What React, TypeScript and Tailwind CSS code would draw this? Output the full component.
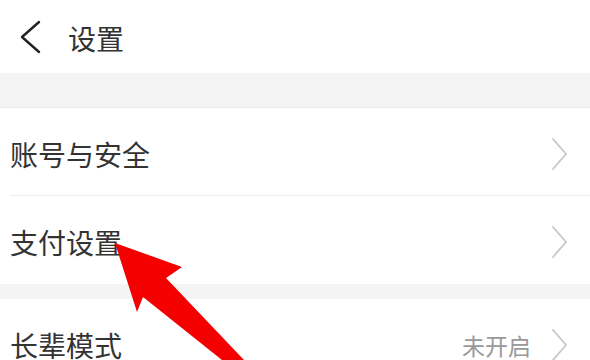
interface Item {
  label: string;
  value?: string;
}

const Chevron = ({ className, color, width }: { className?: string; color: string; width: number }) => (
  <svg className={className} width="18" height="34" viewBox="0 0 18 34" fill="none">
    <polyline
      points="2,2 15,17 2,32"
      stroke={color}
      strokeWidth={width}
      strokeLinecap="round"
      strokeLinejoin="round"
    />
  </svg>
);

const Row = ({ item, divider }: { item: Item; divider: boolean }) => (
  <div className="pl-[10px] bg-white">
    <div
      className={`h-[88px] flex items-center pr-[21px] ${
        divider ? 'border-b border-[#eeeeee]' : ''
      }`}
    >
      <span className="text-[28px] leading-none text-[#333333] pt-[4px]">{item.label}</span>
      <div className="ml-auto flex items-center pt-[4px]">
        {item.value && (
          <span className="text-[23px] leading-none text-[#999999] mr-[20px]">{item.value}</span>
        )}
        <Chevron color="#c6c6c6" width={1.8} />
      </div>
    </div>
  </div>
);

export default function App() {
  return (
    <div
      className="relative w-[590px] h-[360px] overflow-hidden bg-white"
      style={{ fontFamily: '"Noto Sans CJK SC", "Noto Sans", sans-serif' }}
    >
      {/* Header */}
      <div className="h-[73px] flex items-center">
        <svg className="ml-[18px]" width="24" height="34" viewBox="0 0 24 34" fill="none">
          <polyline
            points="21,2 4,17 21,32"
            stroke="#222222"
            strokeWidth={2.4}
            strokeLinecap="round"
            strokeLinejoin="round"
          />
        </svg>
        <span className="ml-[26px] text-[28px] leading-none text-[#333333] pt-[2px]">设置</span>
      </div>

      <div className="h-[35px] bg-[#f4f4f4] border-b border-[#e9e9e9]" />

      <Row item={{ label: '账号与安全' }} divider />
      <Row item={{ label: '支付设置' }} divider={false} />

      <div className="h-[15px] bg-[#f4f4f4]" />

      <Row item={{ label: '长辈模式', value: '未开启' }} divider={false} />

      {/* Annotation arrow */}
      <svg className="absolute inset-0 pointer-events-none" width="590" height="360" viewBox="0 0 590 360">
        <polygon
          points="115,243 182,267 166,278 244,360 222,360 143,297 137,312"
          fill="#f50000"
        />
      </svg>
    </div>
  );
}
